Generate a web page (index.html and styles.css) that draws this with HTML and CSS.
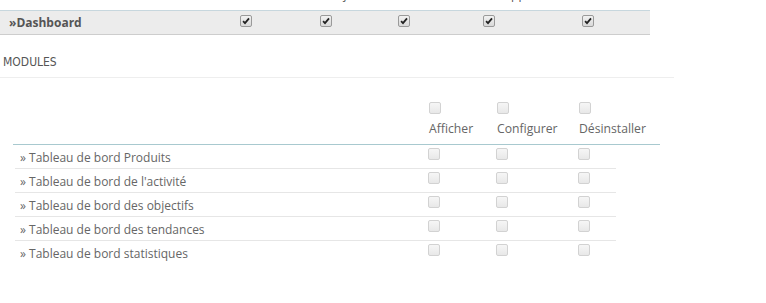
FILE: index.html
```html
<!DOCTYPE html>
<html lang="fr">
<head>
  <meta charset="UTF-8" />
  <meta name="viewport" content="width=device-width, initial-scale=1.0" />
  <title>Permissions</title>
  <link rel="stylesheet" href="styles.css">
</head>
<body>

<!-- column titles of the tab table, scrolled mostly out of view -->
<div class="perm-head">
  <div class="perm-head-inner">
    <span class="h-ajouter">Ajouter</span>
    <span class="h-supprimer">Supprimer</span>
  </div>
</div>

<div class="tab-row">
  <div class="tab-name">&raquo;Dashboard</div>
  <div class="cell"><span class="cbx checked"><svg viewBox="0 0 11 11"><path d="M2.3 5.6 L4.4 7.8 L8.8 2.6"/></svg></span></div>
  <div class="cell"><span class="cbx checked"><svg viewBox="0 0 11 11"><path d="M2.3 5.6 L4.4 7.8 L8.8 2.6"/></svg></span></div>
  <div class="cell"><span class="cbx checked"><svg viewBox="0 0 11 11"><path d="M2.3 5.6 L4.4 7.8 L8.8 2.6"/></svg></span></div>
  <div class="cell"><span class="cbx checked"><svg viewBox="0 0 11 11"><path d="M2.3 5.6 L4.4 7.8 L8.8 2.6"/></svg></span></div>
  <div class="cell"><span class="cbx checked"><svg viewBox="0 0 11 11"><path d="M2.3 5.6 L4.4 7.8 L8.8 2.6"/></svg></span></div>
</div>

<h3 class="panel-heading">Modules</h3>

<div class="modules">
  <div class="mod-head">
    <div></div>
    <div class="head-cell"><span class="cbx"></span><span class="head-label">Afficher</span></div>
    <div class="head-cell"><span class="cbx"></span><span class="head-label">Configurer</span></div>
    <div class="head-cell"><span class="cbx"></span><span class="head-label">Désinstaller</span></div>
  </div>

  <div class="mod-row">
    <div class="mod-name">&raquo; Tableau de bord Produits</div>
    <div><span class="cbx"></span></div>
    <div><span class="cbx"></span></div>
    <div><span class="cbx"></span></div>
  </div>
  <div class="mod-row">
    <div class="mod-name">&raquo; Tableau de bord de l'activité</div>
    <div><span class="cbx"></span></div>
    <div><span class="cbx"></span></div>
    <div><span class="cbx"></span></div>
  </div>
  <div class="mod-row">
    <div class="mod-name">&raquo; Tableau de bord des objectifs</div>
    <div><span class="cbx"></span></div>
    <div><span class="cbx"></span></div>
    <div><span class="cbx"></span></div>
  </div>
  <div class="mod-row">
    <div class="mod-name">&raquo; Tableau de bord des tendances</div>
    <div><span class="cbx"></span></div>
    <div><span class="cbx"></span></div>
    <div><span class="cbx"></span></div>
  </div>
  <div class="mod-row">
    <div class="mod-name">&raquo; Tableau de bord statistiques</div>
    <div><span class="cbx"></span></div>
    <div><span class="cbx"></span></div>
    <div><span class="cbx"></span></div>
  </div>
</div>

</body>
</html>
```

FILE: styles.css
```css
body {
  margin: 0;
  background: #ffffff;
  font-family: "Open Sans", Arial, sans-serif;
  font-size: 12px;
  color: #666;
}

/* top strip: only the descenders of the titles show */
.perm-head {
  height: 10px;
  overflow: hidden;
}

.perm-head-inner {
  display: flex;
  margin-top: -13px;
  line-height: 16px;
  color: #555;
  white-space: nowrap;
}

.h-ajouter { margin-left: 336px; }
.h-supprimer { margin-left: 120px; }

/* dashboard tab row */
.tab-row {
  display: grid;
  grid-template-columns: 240px 80px 78px 85px 99px 1fr;
  width: 650px;
  height: 23px;
  background: #ececec;
  border-top: 1px solid #c7d7de;
  border-bottom: 1px solid #cdcdcd;
}

.tab-name {
  padding-left: 9px;
  font-size: 12px;
  font-weight: bold;
  line-height: 23px;
  color: #555;
}

.tab-row .cell {
  padding-top: 4px;
}

/* fake checkboxes */
.cbx {
  display: block;
  width: 10px;
  height: 10px;
  border: 1px solid #d2d2d2;
  border-radius: 2px;
  background: linear-gradient(#f6f6f6, #e8e8e8);
}

.cbx.checked {
  border-color: #9a9a9a;
  background: linear-gradient(#f2f2f2, #d9d9d9);
}

.cbx svg {
  display: block;
  width: 10px;
  height: 10px;
  fill: none;
  stroke: #222;
  stroke-width: 2;
}

.panel-heading {
  width: 671px;
  margin: 19px 0 0 0;
  padding: 0 0 7px 3px;
  border-bottom: 1px solid #eeeeee;
  font-family: "DejaVu Sans Condensed", "Open Sans", sans-serif;
  font-stretch: condensed;
  font-size: 12px;
  font-weight: normal;
  line-height: 16px;
  text-transform: uppercase;
  color: #555;
}

/* modules table */
.mod-head {
  display: grid;
  grid-template-columns: 416px 68px 82px 1fr;
  width: 647px;
  margin-left: 13px;
  padding: 24px 0 7px 0;
  border-bottom: 1px solid #a8c9cf;
}

.head-cell {
  display: flex;
  flex-direction: column;
}

.head-label {
  margin-top: 6px;
  line-height: 17px;
  font-size: 12.2px;
  color: #666;
}

.mod-row {
  display: grid;
  grid-template-columns: 413px 68px 82px 1fr;
  width: 601px;
  height: 23px;
  margin-left: 15px;
  border-bottom: 1px solid #e6e6e6;
}

.mod-row:last-child {
  border-bottom: none;
}

.mod-row .cbx {
  margin-top: 3px;
}

.mod-name {
  padding: 4px 0 0 5px;
  line-height: 17px;
  color: #666;
}
```
